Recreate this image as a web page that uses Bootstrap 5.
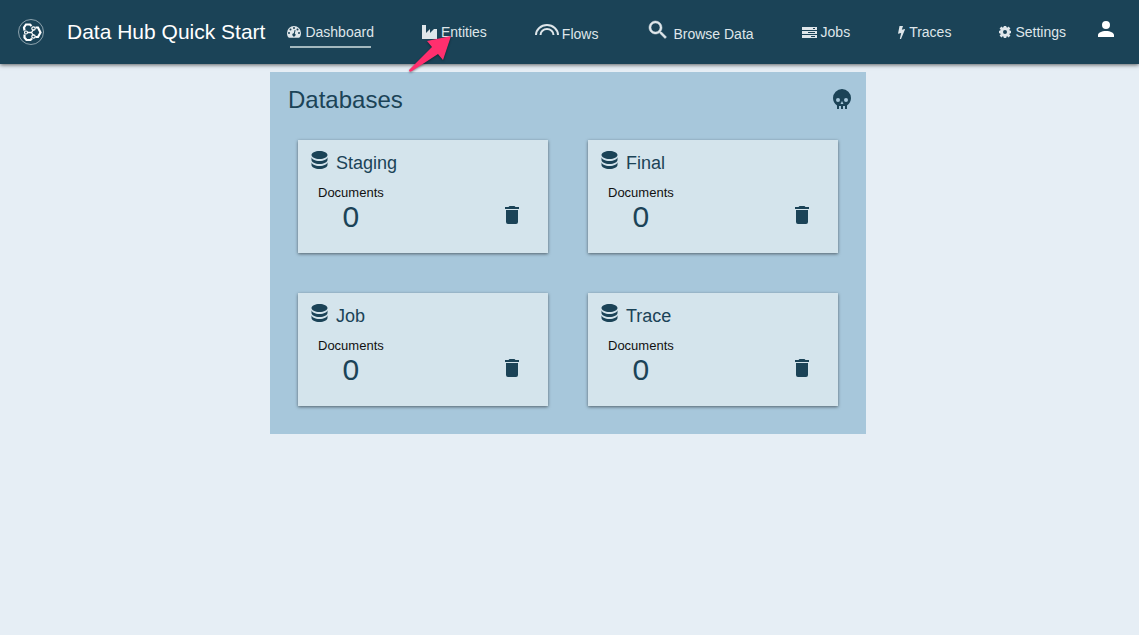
<!DOCTYPE html>
<html lang="en">
<head>
<meta charset="utf-8">
<meta name="viewport" content="width=device-width, initial-scale=1">
<title>Data Hub Quick Start</title>
<link href="https://cdn.jsdelivr.net/npm/bootstrap@5.3.0/dist/css/bootstrap.min.css" rel="stylesheet">
<style>
  body { background: #e6eef5; color: #1b4357; font-family: "Liberation Sans", Arial, sans-serif; }
  svg { fill: currentColor; flex: none; display: block; }
  .topbar { background: #1b4357; min-height: 64px; padding: 0 21px 0 18px; box-shadow: 0 1px 4px rgba(0,0,0,.6); }
  .brand-name { font-size: 21px; line-height: 24px; margin-left: 23px; margin-right: 22px; }
  .main-links { gap: 8px 48px; font-size: 14px; line-height: 20px; }
  .main-links a { color: #dfe6ea; gap: 4px; height: 30px; position: relative; }
  .main-links a.low { gap: 3px; padding-top: 3px; }
  .main-links a.low svg { margin-bottom: 8px; }
  .main-links a.active::after { content: ""; position: absolute; left: 3px; right: 3px; bottom: -1px; height: 2px; background: #a3b8be; }
  .pointer { position: absolute; left: -18px; top: 6px; z-index: 2; pointer-events: none; filter: drop-shadow(0 1px 1px rgba(0,0,0,.4)); }
  .icon-btn { background: none; border: 0; padding: 0; color: inherit; }
  .account { padding-bottom: 6px; }
  .page { padding: 8px 3px 8px 0; }
  .databases { background: #a7c7db; max-width: 596px; padding: 12px 28px 28px; }
  .databases-head { margin: 0 -16px 25px -10px; }
  .databases-head .icon-btn { padding-bottom: 2px; }
  .databases h1 { font-size: 24px; line-height: 31px; }
  .db-grid { display: grid; grid-template-columns: repeat(auto-fit, minmax(220px, 1fr)); gap: 40px; }
  .db-card { background: #d4e4ec; padding: 11px 24px 22px 13px; box-shadow: 0 1px 3px rgba(0,0,0,.5); }
  .db-card h2 { font-size: 18px; line-height: 24px; }
  .db-card dl { margin-left: 7px; }
  .db-card dt { font-size: 13px; line-height: 20px; color: #111; margin-top: 8px; }
  .db-card dd { font-size: 30px; line-height: 28px; }
</style>
</head>
<body>
<svg class="d-none" aria-hidden="true">
  <symbol id="i-db" viewBox="4 3 16 18"><path d="M12 3C7.580 3 4 4.790 4 7s3.580 4 8 4 8-1.790 8-4-3.580-4-8-4M4 9v3c0 2.210 3.580 4 8 4s8-1.790 8-4V9c0 2.210-3.580 4-8 4s-8-1.790-8-4m0 5v3c0 2.210 3.580 4 8 4s8-1.790 8-4v-3c0 2.210-3.580 4-8 4s-8-1.790-8-4z"/></symbol>
  <symbol id="i-trash" viewBox="0 0 24 24"><path d="M19 4h-3.500l-1-1h-5l-1 1H5v2h14M6 19a2 2 0 0 0 2 2h8a2 2 0 0 0 2-2V7H6z"/></symbol>
</svg>

<header class="topbar navbar navbar-expand text-white">
  <a href="#" class="d-flex align-items-center text-white text-decoration-none">
    <svg width="26" height="26" viewBox="0 0 26 26" fill="none" stroke="#fff" style="fill:none">
      <circle cx="13" cy="13" r="12.500" stroke="#a9bac3" stroke-width=".8"/>
      <path d="M6.500 11.500 6 8.500 8 5.500h4l1.500 1.500M6.500 15.500v3l2 2.500h4l1.500-1.500M17.500 8.500h2.500l2.500 5-2.500 4.500h-2.500" stroke-width="2.200"/>
      <path d="M9.500 13.500h4l2-3M13.500 13.500l2 3" stroke-width="1.300"/>
      <circle cx="8" cy="13.500" r="1.500" stroke-width="1.200"/><circle cx="15.500" cy="9.500" r="1.700" stroke-width="1.200"/><circle cx="15.500" cy="17.500" r="1.700" stroke-width="1.200"/>
    </svg>
    <span class="brand-name text-nowrap">Data Hub Quick Start</span>
  </a>
  <nav class="main-links d-flex flex-wrap" aria-label="Main">
    <a href="#" class="active d-flex align-items-center text-decoration-none" aria-current="page">
      <svg width="14" height="12" viewBox="0 0 14 12"><path fill-rule="evenodd" d="M7 0a7 7 0 0 0-7 7c0 1.800.5 3.300 1.300 4.300.2.300.4.400.7.400h10c.3 0 .5-.1.700-.4C13.500 10.300 14 8.800 14 7a7 7 0 0 0-7-7M2 6a1 1 0 1 0 0 2 1 1 0 0 0 0-2m1.500-3.500a1 1 0 1 0 0 2 1 1 0 0 0 0-2M7 1a1 1 0 1 0 0 2 1 1 0 0 0 0-2m3.500 1.500a1 1 0 1 0 0 2 1 1 0 0 0 0-2M12 6a1 1 0 1 0 0 2 1 1 0 0 0 0-2M7.600 4 6.800 7.300a1.600 1.600 0 1 0 1 .2L8.600 4.300z"/></svg>
      <span>Dashboard</span></a>
    <a href="#" class="d-flex align-items-center text-decoration-none">
      <svg width="15" height="14" viewBox="0 0 15 14"><path d="M0 0h4v8l4-4v4l4-4h3v10H0z"/></svg>
      <span>Entities</span>
      <svg class="pointer" width="50" height="52" viewBox="0 0 50 52"><path fill="#ff2f6e" d="M47 13 39 37l-5-6L8 48q-3 2-3-1L28 24l-5-6z"/></svg>
    </a>
    <a href="#" class="low d-flex align-items-center text-decoration-none">
      <svg width="24" height="12" viewBox="0 0 24 12"><path fill="none" stroke="currentColor" stroke-width="2" d="M1 11a11 10 0 0 1 22 0M5.500 11a6.500 6 0 0 1 13 0"/></svg>
      <span>Flows</span></a>
    <a href="#" class="low d-flex align-items-center text-decoration-none">
      <svg width="24" height="24" viewBox="0 0 24 24"><path stroke="currentColor" stroke-width=".5" d="M9.500 3A6.500 6.500 0 0 1 16 9.500c0 1.610-.59 3.090-1.560 4.230l.27.270h.79l5 5-1.500 1.500-5-5v-.79l-.27-.27A6.500 6.500 0 1 1 9.500 3m0 2a4.500 4.500 0 1 0 0 9 4.500 4.500 0 0 0 0-9"/></svg>
      <span class="text-nowrap">Browse Data</span></a>
    <a href="#" class="d-flex align-items-center text-decoration-none">
      <svg width="15" height="11" viewBox="0 0 15 11"><path fill-rule="evenodd" d="M0 0h15v3H0zm11 1v1h2V1zM0 4h15v3H0zm6 1v1h7V5zM0 8h15v3H0zm9 1v1h4V9z"/></svg>
      <span>Jobs</span></a>
    <a href="#" class="d-flex align-items-center text-decoration-none">
      <svg width="7" height="13" viewBox="0 0 7 13"><path d="M1.500 0h3.500L3.800 3.700 7.200 3 3 13H1.800l1.400-6L0 7.800z"/></svg>
      <span>Traces</span></a>
    <a href="#" class="d-flex align-items-center text-decoration-none">
      <svg width="12" height="12" viewBox="0 0 12 12"><circle cx="6" cy="6" r="3.500" fill="none" stroke="currentColor" stroke-width="3"/><path fill="none" stroke="currentColor" stroke-width="2.600" d="M6 0v2M6 10v2M0 6h2M10 6h2M1.500 1.500l1.500 1.500M9 9l1.500 1.500M1.500 10.500l1.500-1.500M9 3l1.500-1.500"/></svg>
      <span>Settings</span></a>
  </nav>
  <button class="icon-btn account ms-auto" type="button" aria-label="Account">
    <svg width="24" height="24" viewBox="0 0 24 24"><path d="M12 4a4 4 0 1 1 0 8 4 4 0 0 1 0-8m0 10c4.420 0 8 1.790 8 4v2H4v-2c0-2.210 3.580-4 8-4"/></svg>
  </button>
</header>

<main class="page">
  <section class="databases mx-auto">
    <div class="databases-head d-flex justify-content-between align-items-center">
      <h1 class="fw-normal mb-0">Databases</h1>
      <button class="icon-btn" type="button" aria-label="Clear all databases">
        <svg width="24" height="24" viewBox="0 0 24 24"><path fill-rule="evenodd" d="M12 2a9 9 0 0 0-9 9c0 3.030 1.530 5.820 4 7.470V22h2v-3h2v3h2v-3h2v3h2v-3.540c2.470-1.650 4-4.460 4-7.460a9 9 0 0 0-9-9M8 11a2 2 0 1 1 0 4 2 2 0 0 1 0-4m8 0a2 2 0 1 1 0 4 2 2 0 0 1 0-4m-4 3 1.500 3h-3z"/></svg>
      </button>
    </div>
    <div class="db-grid">
      <article class="db-card">
        <h2 class="d-flex fw-normal gap-2 mb-0"><svg width="17" height="18"><use href="#i-db"/></svg>Staging</h2>
        <div class="d-flex justify-content-between align-items-end"><dl class="mb-0 text-center"><dt class="fw-normal">Documents</dt><dd class="mb-0">0</dd></dl>
        <button class="icon-btn mb-1" type="button" aria-label="Clear Staging"><svg width="24" height="24"><use href="#i-trash"/></svg></button></div>
      </article>
      <article class="db-card">
        <h2 class="d-flex fw-normal gap-2 mb-0"><svg width="17" height="18"><use href="#i-db"/></svg>Final</h2>
        <div class="d-flex justify-content-between align-items-end"><dl class="mb-0 text-center"><dt class="fw-normal">Documents</dt><dd class="mb-0">0</dd></dl>
        <button class="icon-btn mb-1" type="button" aria-label="Clear Final"><svg width="24" height="24"><use href="#i-trash"/></svg></button></div>
      </article>
      <article class="db-card">
        <h2 class="d-flex fw-normal gap-2 mb-0"><svg width="17" height="18"><use href="#i-db"/></svg>Job</h2>
        <div class="d-flex justify-content-between align-items-end"><dl class="mb-0 text-center"><dt class="fw-normal">Documents</dt><dd class="mb-0">0</dd></dl>
        <button class="icon-btn mb-1" type="button" aria-label="Clear Job"><svg width="24" height="24"><use href="#i-trash"/></svg></button></div>
      </article>
      <article class="db-card">
        <h2 class="d-flex fw-normal gap-2 mb-0"><svg width="17" height="18"><use href="#i-db"/></svg>Trace</h2>
        <div class="d-flex justify-content-between align-items-end"><dl class="mb-0 text-center"><dt class="fw-normal">Documents</dt><dd class="mb-0">0</dd></dl>
        <button class="icon-btn mb-1" type="button" aria-label="Clear Trace"><svg width="24" height="24"><use href="#i-trash"/></svg></button></div>
      </article>
    </div>
  </section>
</main>
<script src="https://cdn.jsdelivr.net/npm/bootstrap@5.3.0/dist/js/bootstrap.bundle.min.js"></script>
</body>
</html>
